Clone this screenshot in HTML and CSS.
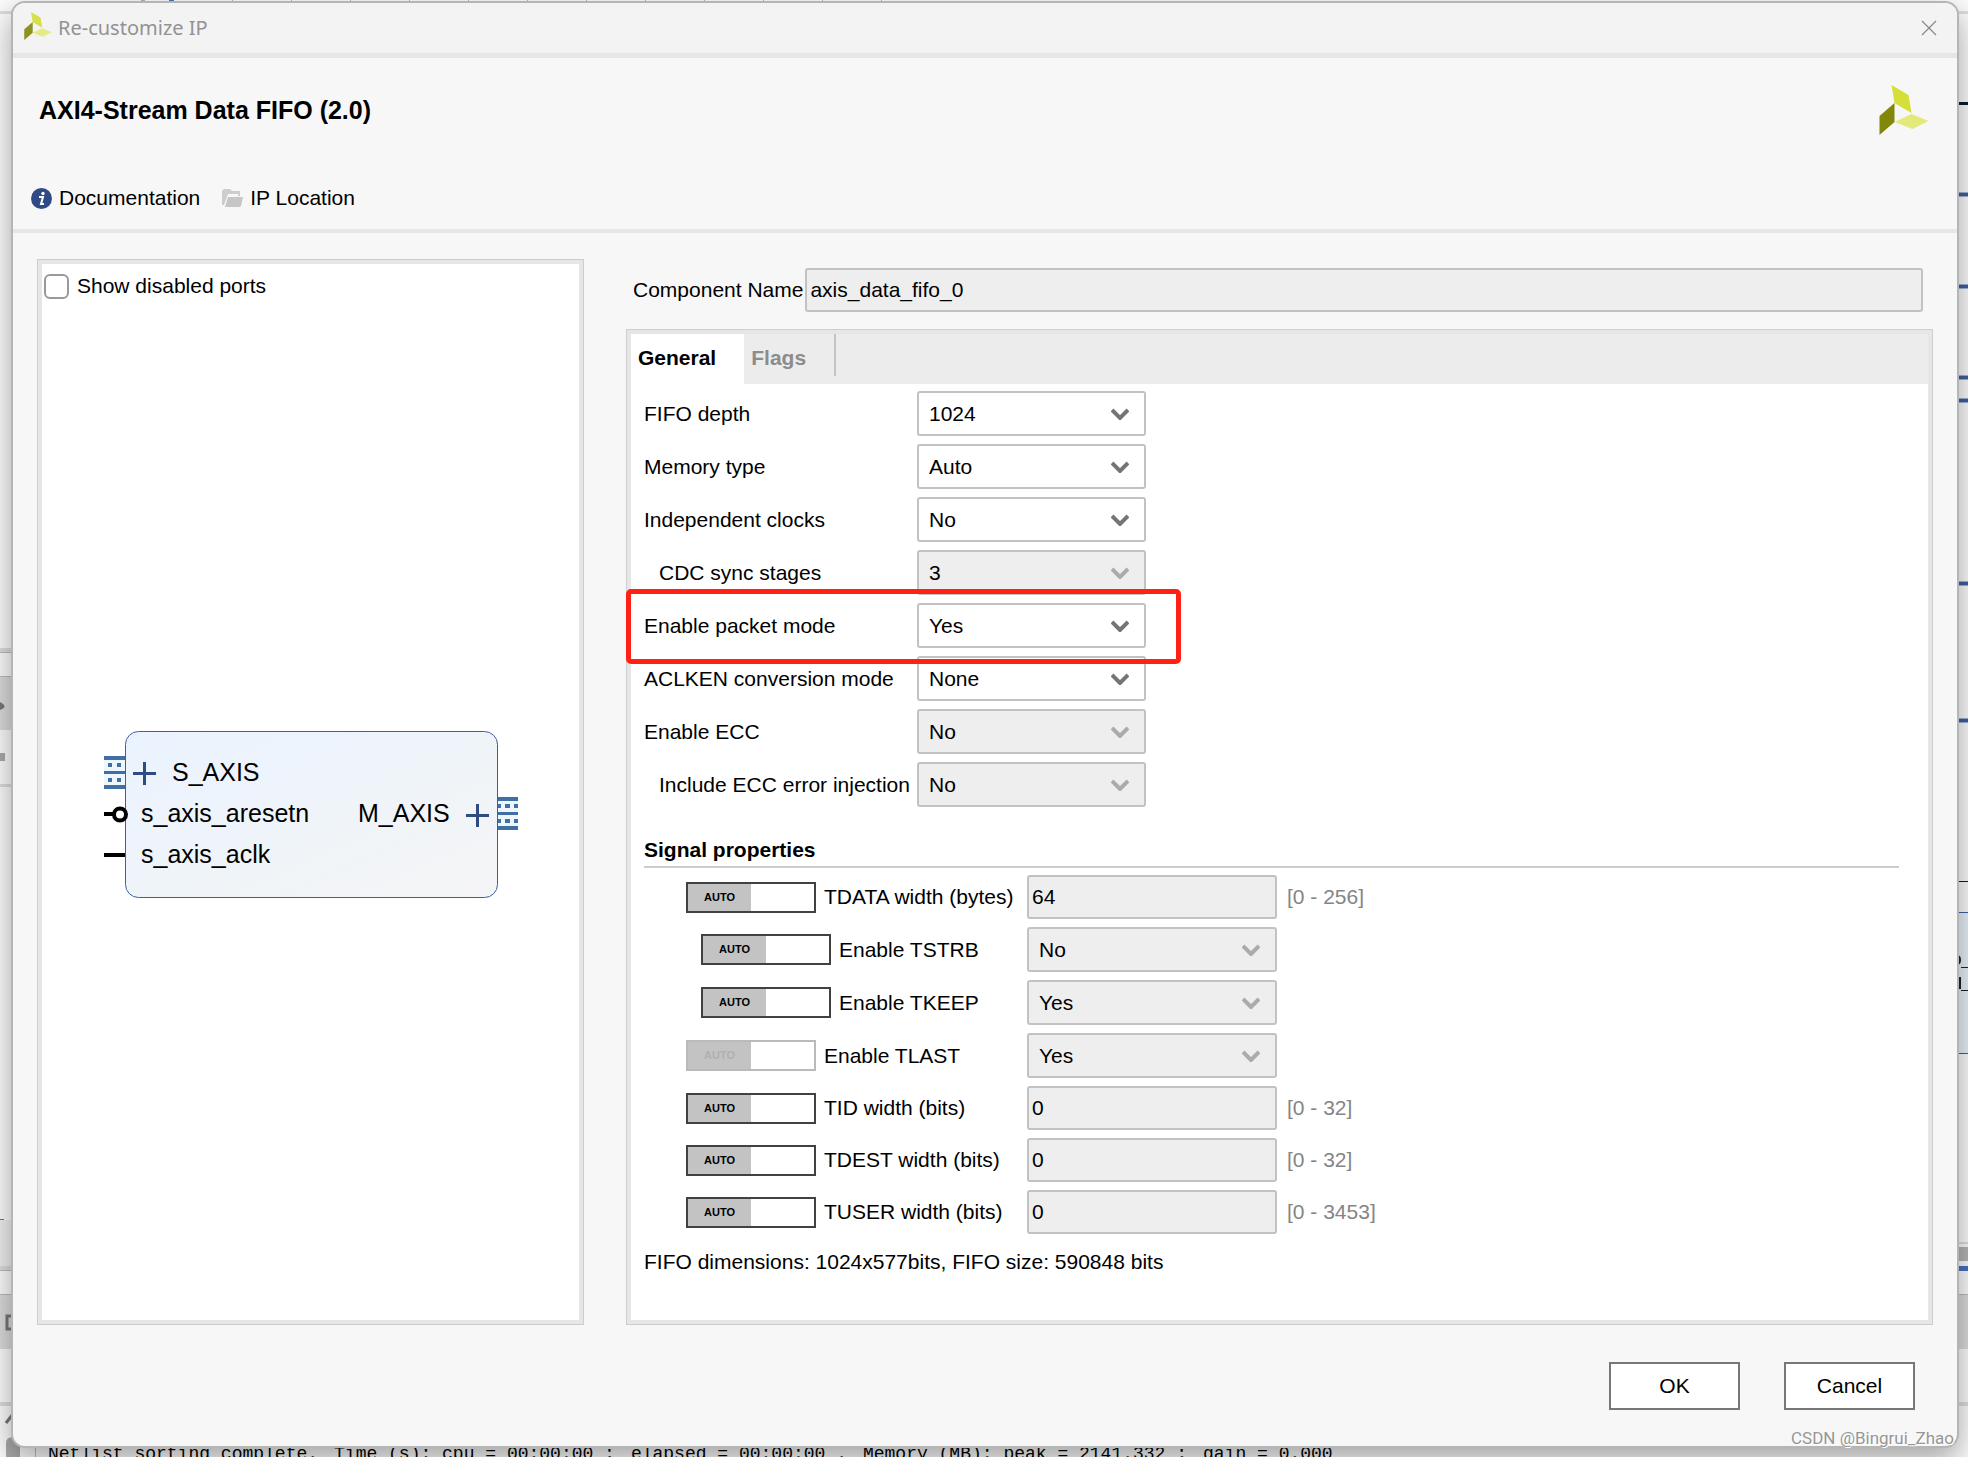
FILE: index.html
```html
<!DOCTYPE html>
<html lang="en">
<head>
<meta charset="utf-8">
<title>Re-customize IP</title>
<link rel="stylesheet" href="styles.css">
</head>
<body>
<div class="workspace" aria-hidden="true">
  <svg class="edge edge-top" width="900" height="16">
    <path fill="#dcdcdc" d="M0 11h900v3H0z"/>
    <path fill="#b0b0b0" d="M141 0h4v3h-4zM232 0h1v3h-1zM291 0h1v3h-1zM350 0h1v3h-1zM409 0h1v3h-1zM468 0h1v3h-1zM527 0h1v3h-1zM586 0h1v3h-1zM645 0h1v3h-1zM704 0h1v3h-1zM763 0h1v3h-1zM822 0h1v3h-1zM881 0h1v3h-1z"/>
    <path fill="#4472c4" d="M169 0h5v3h-5z"/>
  </svg>
  <svg class="edge edge-left" width="40" height="1457">
    <path fill="#dcdcdc" d="M0 648h40v4H0zM0 784h40v3H0zM0 1266h40v4H0zM0 1295h40v4H0zM0 1402h40v4H0z"/>
    <path fill="#dadada" d="M0 676h40v54H0zM0 1299h40v50H0z"/>
    <path fill="#bbb" d="M0 652h40v1H0zM0 676h40v1H0zM0 1270h40v1H0zM0 1294h40v1H0zM35 1406h1v51h-1z"/>
    <path fill="#eee" d="M0 1220h40v46H0z"/>
    <path fill="#777" d="M0 702q6 3 4 6l-4 2zM0 1219h4v1H0z"/>
    <path fill="#aaa" d="M0 753h5v8H0zM6 1457v-14q0-6 7-6t7 6v14z"/>
    <path fill="none" stroke="#777" stroke-width="3" d="M14 1316H7v13h7M6 1423l7-9"/>
  </svg>
  <svg class="edge edge-right" width="12" height="1457">
    <path fill="#dcdcdc" d="M0 11h12v3H0zM0 1242h12v2H0zM0 1402h12v4H0z"/>
    <path fill="#0e1c30" d="M0 102h12v3H0zM0 881h12v1H0z"/>
    <path fill="#9fb0d3" d="M0 192h12v5H0zM0 284h12v5H0zM0 375h12v5H0zM0 398h12v5H0zM0 581h12v5H0zM0 718h12v5H0z"/>
    <path fill="#3d5f9f" d="M0 193h12v3H0zM0 285h12v3H0zM0 376h12v3H0zM0 399h12v3H0zM0 582h12v3H0zM0 719h12v3H0z"/>
    <path fill="#e6f0f9" d="M0 912h12v142H0z"/>
    <path fill="#3d5f9f" d="M0 912h12v1H0zM0 1053h12v1H0z"/>
    <path fill="#222" d="M5 967h7v1H5zM5 990h7v1H5z"/>
    <path fill="none" stroke="#222" stroke-width="2" d="M1 956q3 0 3 4t-3 4M4 977v12M0 984h2"/>
    <path fill="#b4b4b4" d="M0 1247h12v14H0z"/>
    <path fill="#4472c4" d="M0 1266h12v5H0z"/>
    <path fill="#dadada" d="M0 1294h12v55H0z"/>
    <path fill="#bbb" d="M0 1294h12v1H0z"/>
  </svg>
  <div class="console"><span>Netlist sorting complete.</span><span>Time (s): cpu = 00:00:00 ;</span><span>elapsed = 00:00:00 .</span><span>Memory (MB): peak = 2141.332 ;</span><span>gain = 0.000</span></div>
</div>

<svg class="defs" width="0" height="0" aria-hidden="true">
  <symbol id="logo" viewBox="0 0 49 50">
    <path fill="#d4df38" d="M12 0l17 10 3 18L15 18z"/>
    <path fill="#838707" d="M0 31l15-13v19L0 50z"/>
    <path fill="#e3ea7a" d="M15 37l17-8 17 7-16 8z"/>
  </symbol>
  <symbol id="chevron" viewBox="0 0 18 12">
    <path fill="none" stroke="currentColor" stroke-width="4" d="M1 2l8 8 8-8"/>
  </symbol>
</svg>

<div class="dialog" role="dialog" aria-labelledby="dialog-title">
  <div class="titlebar">
    <svg class="titlebar-logo" width="28" height="28"><use href="#logo"/></svg>
    <span id="dialog-title">Re-customize IP</span>
    <button class="close" type="button" aria-label="Close"><svg width="16" height="16"><path d="M1 1l14 14M15 1L1 15" fill="none" stroke="#8a8a8a" stroke-width="1.300"/></svg></button>
  </div>

  <header class="header">
    <div class="header-top">
      <h1>AXI4-Stream Data FIFO (2.0)</h1>
      <svg width="50" height="50"><use href="#logo"/></svg>
    </div>
    <nav class="links">
      <a href="#documentation"><svg width="21" height="21" viewBox="0 0 21 21"><circle cx="10.500" cy="10.500" r="10.500" fill="#2f4b85"/><circle cx="12" cy="5.500" r="1.700" fill="#fff"/><path d="M8 9h4l-2 7h3" fill="none" stroke="#fff" stroke-width="2"/></svg>Documentation</a>
      <a href="#location"><svg width="21" height="18" viewBox="0 0 21 18"><path fill="#cdcdcd" d="M0 16V2l2-2h6l2 2h8v5h-2V5H6L2 16z"/><path fill="#c6c6c6" d="M6 8h15l-2 9-1 1H3z"/></svg>IP Location</a>
    </nav>
  </header>

  <main class="main">
    <section class="panel preview">
      <label class="check"><input type="checkbox">Show disabled ports</label>
      <div class="canvas">
        <svg width="414" height="167" viewBox="0 0 414 167" role="img" aria-label="Block symbol">
          <defs><linearGradient id="block" x1="0" y1="0" x2="1" y2="1"><stop offset="0" stop-color="#eaf3fe"/><stop offset=".45" stop-color="#eff4fb"/><stop offset=".6" stop-color="#f0f4f8"/><stop offset="1" stop-color="#f5f5f6"/></linearGradient></defs>
          <rect x="21.500" y=".5" width="372" height="166" rx="13" fill="url(#block)" stroke="#3d5f9f"/>
          <path fill="#edf5fd" d="M0 25h21v33H0zM394 66h20v33h-20z"/>
          <path fill="#3f6fa3" d="M0 25h21v4H0zM0 40h21v3H0zM0 54h21v4H0zM4 32h4v4H4zM13 32h4v4h-4zM4 47h4v4H4zM13 47h4v4h-4z"/>
          <path fill="#3f6fa3" d="M394 66h20v4h-20zM394 81h20v3h-20zM394 95h20v4h-20zM394 73h3v4h-3zM401 73h5v4h-5zM410 73h4v4h-4zM394 88h3v4h-3zM401 88h5v4h-5zM410 88h4v4h-4z"/>
          <path fill="none" stroke="#2f4b85" stroke-width="3" d="M29 42.500h23M40.500 31v23M362 84.500h23M373.500 73v23"/>
          <path fill="none" stroke="#000" stroke-width="4" d="M0 83h9M0 124h21"/>
          <circle cx="16" cy="83.500" r="6" fill="#fff" stroke="#000" stroke-width="4"/>
          <g class="port-names">
            <text x="68" y="50">S_AXIS</text>
            <text x="37" y="91">s_axis_aresetn</text>
            <text x="37" y="132">s_axis_aclk</text>
            <text x="254" y="91">M_AXIS</text>
          </g>
        </svg>
      </div>
    </section>

    <div class="settings">
      <div class="name-row"><label for="name">Component Name</label><input class="field" id="name" value="axis_data_fifo_0" readonly></div>
      <section class="panel config">
        <div class="tabs" role="tablist">
          <button class="tab active" type="button" role="tab" aria-selected="true">General</button>
          <button class="tab" type="button" role="tab" aria-selected="false">Flags</button>
        </div>
        <div class="config-body">
          <div class="rows">
            <div class="row"><label for="depth">FIFO depth</label><span class="select"><select id="depth"><option>1024</option></select><svg><use href="#chevron"/></svg></span></div>
            <div class="row"><label for="memory">Memory type</label><span class="select"><select id="memory"><option>Auto</option></select><svg><use href="#chevron"/></svg></span></div>
            <div class="row"><label for="clocks">Independent clocks</label><span class="select"><select id="clocks"><option>No</option></select><svg><use href="#chevron"/></svg></span></div>
            <div class="row"><label class="indent" for="cdc">CDC sync stages</label><span class="select"><select id="cdc" disabled><option>3</option></select><svg><use href="#chevron"/></svg></span></div>
            <div class="row marked"><label for="packet">Enable packet mode</label><span class="select"><select id="packet"><option>Yes</option></select><svg><use href="#chevron"/></svg></span></div>
            <div class="row"><label for="aclken">ACLKEN conversion mode</label><span class="select"><select id="aclken"><option>None</option></select><svg><use href="#chevron"/></svg></span></div>
            <div class="row"><label for="ecc">Enable ECC</label><span class="select"><select id="ecc" disabled><option>No</option></select><svg><use href="#chevron"/></svg></span></div>
            <div class="row"><label class="indent" for="inject">Include ECC error injection</label><span class="select"><select id="inject" disabled><option>No</option></select><svg><use href="#chevron"/></svg></span></div>
          </div>

          <h2>Signal properties</h2>
          <div class="rows signals">
            <div class="signal"><div class="signal-name"><button class="toggle" type="button" role="switch" aria-checked="true"><span>AUTO</span></button><label for="tdata">TDATA width (bytes)</label></div><input class="field" id="tdata" value="64" readonly><span class="range">[0 - 256]</span></div>
            <div class="signal"><div class="signal-name indent"><button class="toggle" type="button" role="switch" aria-checked="true"><span>AUTO</span></button><label for="tstrb">Enable TSTRB</label></div><span class="select"><select id="tstrb" disabled><option>No</option></select><svg><use href="#chevron"/></svg></span></div>
            <div class="signal"><div class="signal-name indent"><button class="toggle" type="button" role="switch" aria-checked="true"><span>AUTO</span></button><label for="tkeep">Enable TKEEP</label></div><span class="select"><select id="tkeep" disabled><option>Yes</option></select><svg><use href="#chevron"/></svg></span></div>
            <div class="signal"><div class="signal-name"><button class="toggle" type="button" role="switch" aria-checked="true" disabled><span>AUTO</span></button><label for="tlast">Enable TLAST</label></div><span class="select"><select id="tlast" disabled><option>Yes</option></select><svg><use href="#chevron"/></svg></span></div>
            <div class="signal"><div class="signal-name"><button class="toggle" type="button" role="switch" aria-checked="true"><span>AUTO</span></button><label for="tid">TID width (bits)</label></div><input class="field" id="tid" value="0" readonly><span class="range">[0 - 32]</span></div>
            <div class="signal"><div class="signal-name"><button class="toggle" type="button" role="switch" aria-checked="true"><span>AUTO</span></button><label for="tdest">TDEST width (bits)</label></div><input class="field" id="tdest" value="0" readonly><span class="range">[0 - 32]</span></div>
            <div class="signal"><div class="signal-name"><button class="toggle" type="button" role="switch" aria-checked="true"><span>AUTO</span></button><label for="tuser">TUSER width (bits)</label></div><input class="field" id="tuser" value="0" readonly><span class="range">[0 - 3453]</span></div>
          </div>
          <p class="summary">FIFO dimensions: 1024x577bits, FIFO size: 590848 bits</p>
        </div>
      </section>
    </div>
  </main>

  <footer class="footer">
    <button class="button" type="button">OK</button>
    <button class="button" type="button">Cancel</button>
  </footer>
</div>
<div class="watermark">CSDN @Bingrui_Zhao</div>
</body>
</html>
```
FILE: styles.css
```css
*, *::after { box-sizing: border-box; }

body {
  position: relative;
  display: flex;
  min-height: 100vh;
  margin: 0;
  padding: 1px 9px 9px 11px;
  overflow-x: hidden;
  background: #fbfbfb;
  color: #000;
  font: 21px/24px "Liberation Sans", Arial, sans-serif;
}

button, input, select { font: inherit; color: inherit; }

.defs { position: absolute; }

/* Application window behind the dialog */
.workspace { position: absolute; inset: 0; overflow: hidden; }
.edge { position: absolute; top: 0; }
.edge-top, .edge-left { left: 0; }
.edge-right { right: 0; }
.console {
  position: absolute;
  left: 48px;
  bottom: -9px;
  display: flex;
  gap: 16px;
  font: 18px/24px "Liberation Mono", monospace;
  white-space: pre;
}

.dialog {
  position: relative;
  display: flex;
  flex: 1;
  flex-direction: column;
  min-width: 0;
  border: 2px solid #b4b5b5;
  border-radius: 14px;
  background: #f7f7f7;
  box-shadow: 0 12px 30px rgba(0, 0, 0, .35);
}

.titlebar {
  display: flex;
  align-items: center;
  gap: 6px;
  height: 55px;
  padding: 0 20px 0 11px;
  border-bottom: 5px solid #e6e6e6;
  border-radius: 12px 12px 0 0;
  background: #f3f3f3;
  color: #929292;
  font-size: 20px;
  font-family: "Noto Sans", sans-serif;
}
.titlebar-logo { margin-bottom: 4px; opacity: .9; }
.close {
  display: flex;
  margin-left: auto;
  padding: 0;
  border: 0;
  background: none;
}

.header {
  padding: 27px 28px 19px 18px;
  border-bottom: 4px solid #e6e6e6;
}
.header-top {
  display: flex;
  align-items: center;
  justify-content: space-between;
  padding-left: 8px;
}
h1 { margin: 0; font-size: 25px; line-height: 28px; }
.links { display: flex; gap: 22px; margin-top: 51px; }
.links a {
  display: flex;
  align-items: center;
  gap: 7px;
  color: inherit;
  text-decoration: none;
}

.main {
  display: grid;
  flex: 1;
  grid-template-columns: 547px minmax(0, 1fr);
  gap: 42px;
  padding: 26px 24px 0;
}
.panel {
  margin: 1px;
  border: 4px solid #e6e6e6;
  background: #fff;
  box-shadow: 0 0 0 1px #cecece;
}

.preview { display: flex; flex-direction: column; }
.check {
  display: flex;
  align-items: center;
  gap: 8px;
  height: 44px;
  padding-left: 2px;
}
.check input {
  width: 25px;
  height: 25px;
  margin: 0;
  border: 2px solid #999;
  border-radius: 6px;
  background: #fff;
  appearance: none;
}
.canvas {
  display: flex;
  flex: 1;
  align-items: center;
  justify-content: center;
}
.port-names { font-size: 25px; }

.settings { display: flex; flex-direction: column; padding-top: 9px; }
.name-row {
  display: flex;
  align-items: center;
  gap: 2px;
  margin-bottom: 17px;
  padding: 0 10px 0 7px;
}
.field {
  width: 250px;
  height: 44px;
  padding: 0 3px;
  border: 2px solid #c2c2c2;
  border-radius: 3px;
  background: #eee;
}
.name-row .field { flex: 1; }

.config { flex: 1; }
.tabs { display: flex; height: 50px; background: #ececec; }
.tab {
  height: 42px;
  padding: 6px 28px 0 7px;
  border: 0;
  border-right: 2px solid #c4c4c4;
  background: none;
  color: #8c8c8c;
  font-weight: bold;
}
.tab.active {
  height: 50px;
  padding-bottom: 8px;
  border-right: 0;
  background: #fff;
  color: #000;
}

.config-body { padding: 7px 29px 20px 13px; }
.rows { display: grid; gap: 8px; }
.row {
  position: relative;
  display: grid;
  grid-template-columns: 273px 229px;
  align-items: center;
}
.indent { padding-left: 15px; }
.marked::after {
  content: "";
  position: absolute;
  top: -14px;
  left: -18px;
  z-index: 1;
  width: 555px;
  height: 75px;
  border: 5px solid #ff2116;
  border-radius: 5px;
  pointer-events: none;
}

.select { position: relative; display: block; height: 45px; }
.select select {
  width: 100%;
  height: 100%;
  padding: 0 40px 0 10px;
  border: 2px solid #c2c2c2;
  border-radius: 3px;
  background: #fff;
  appearance: none;
}
.select select:disabled { background: #eee; color: #000; opacity: 1; }
.select svg {
  position: absolute;
  top: 17px;
  right: 17px;
  width: 18px;
  height: 12px;
  color: #757575;
  pointer-events: none;
}
.select select:disabled + svg { color: #ababab; }

h2 {
  margin: 31px 0 7px;
  padding-bottom: 4px;
  border-bottom: 2px solid #cdcdcd;
  font-size: 21px;
  line-height: 24px;
}
.signals { padding-left: 42px; }
.signal {
  display: grid;
  grid-template-columns: 341px 250px auto;
  align-items: center;
  justify-content: start;
}
.signal-name { display: flex; align-items: center; gap: 8px; }
.range { padding-left: 10px; color: #858585; }
.toggle {
  display: flex;
  width: 130px;
  height: 31px;
  padding: 0;
  border: 2px solid #414141;
  background: #fff;
  font-size: 11px;
  font-weight: bold;
}
.toggle span {
  width: 50%;
  height: 100%;
  background: #c3c3c3;
  line-height: 27px;
}
.toggle:disabled { border-color: #bababa; color: #b0b0b0; }
.summary { margin: 16px 0 0; }

.footer {
  display: flex;
  justify-content: flex-end;
  gap: 44px;
  padding: 37px 42px 36px;
}
.button {
  width: 131px;
  height: 48px;
  border: 2px solid #777;
  background: #fff;
}

.watermark {
  position: absolute;
  right: 14px;
  bottom: 7px;
  color: #969696;
  font: 17px/24px Roboto, sans-serif;
  text-shadow: 1px 1px 0 #fff;
}
```
